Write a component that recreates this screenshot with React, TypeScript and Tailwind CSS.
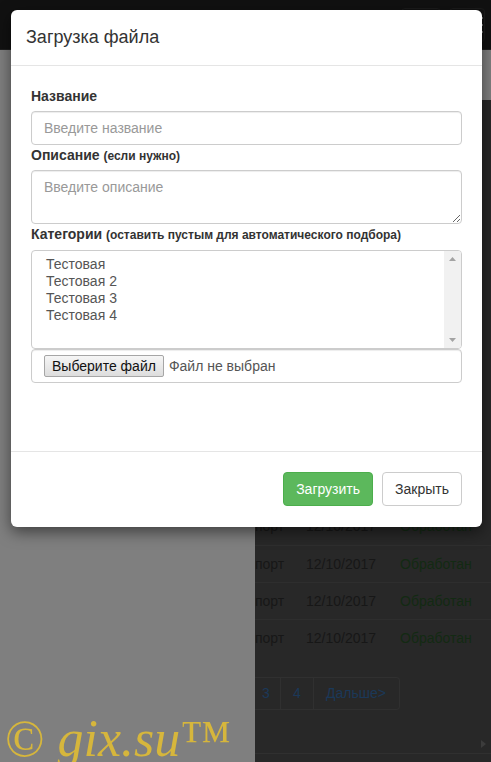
import React from 'react';

const rows = ['порт', 'порт', 'порт', 'порт'];
const categories = ['Тестовая', 'Тестовая 2', 'Тестовая 3', 'Тестовая 4'];

// Page behind the dimmed backdrop
const Backdrop: React.FC = () => (
  <div className="flex flex-col h-full">
    <div className="h-[50px] shrink-0 bg-[#111] border-b border-[#1e1e1e] flex items-center justify-end gap-[8px] pr-[6px]">
      <div className="w-[40px] h-[34px] rounded-[4px] border border-[#1b1b1b]" />
      <div className="w-[36px] h-[34px] rounded-[4px] border border-[#1b1b1b] flex flex-col items-end justify-center gap-[5px] pr-[1px]">
        <span className="block w-[22px] h-[2px] bg-[#666]" />
        <span className="block w-[22px] h-[2px] bg-[#666]" />
        <span className="block w-[22px] h-[2px] bg-[#666]" />
      </div>
    </div>
    <div className="flex flex-1 min-h-0">
      <div className="w-[255px] shrink-0 bg-[#7f7f7f]" />
      <div className="flex-1 flex flex-col bg-[#7f7f7f]">
        <div className="h-[50px] shrink-0" />
        <div className="flex-1 bg-[#282828] flex flex-col pt-[408px] text-[14px]">
          {rows.map((r, i) => (
            <div key={i} className={`h-[37px] flex items-center ${i > 0 ? 'border-t border-[#2e2e2e]' : ''}`}>
              <div className="w-[51px] shrink-0 whitespace-nowrap text-[#171717]">{r}</div>
              <div className="w-[94px] shrink-0 text-[#171717]">12/10/2017</div>
              <div className="text-[#132a13]">Обработан</div>
            </div>
          ))}
          <div className="mt-[21px] flex h-[33px] w-[145px] border border-l-0 border-[#303030] rounded-r-[4px] text-[#1b3858]">
            <div className="w-[26px] flex items-center pl-[7px] border-r border-[#303030]">3</div>
            <div className="w-[33px] flex items-center justify-center border-r border-[#303030]">4</div>
            <div className="flex-1 flex items-center pl-[12px]">Дальше&gt;</div>
          </div>
          <div className="mt-[25px] h-[19px] border-b border-[#303030] flex items-center justify-end pr-[5px]">
            <svg width="5" height="8" viewBox="0 0 5 8">
              <path d="M0 0 L5 4 L0 8 Z" fill="#3c3c3c" />
            </svg>
          </div>
        </div>
      </div>
    </div>
  </div>
);

const inputCls =
  'block w-full h-[34px] px-[12px] py-[6px] text-[14px] text-[#555] bg-white border border-[#ccc] rounded-[4px] shadow-[inset_0_1px_1px_rgba(0,0,0,0.075)] outline-none placeholder:text-[#999]';

const UploadModal: React.FC = () => (
  <div className="absolute left-[11px] top-[10px] w-[471px] bg-white rounded-[6px] shadow-[0_5px_15px_rgba(0,0,0,0.5)] text-[#333]">
    <div className="px-[15px] py-[15px] border-b border-[#e5e5e5]">
      <h4 className="text-[18px] leading-[25px]">Загрузка файла</h4>
    </div>

    <div className="h-[385px] p-[20px] text-[14px] leading-[20px]">
      <label className="block font-bold mb-[5px]">Название</label>
      <input type="text" placeholder="Введите название" className={inputCls} />

      <label className="block font-bold mb-[4px]">
        Описание <small className="text-[12px]">(если нужно)</small>
      </label>
      <textarea
        placeholder="Введите описание"
        className="block w-full h-[54px] px-[12px] py-[6px] text-[14px] text-[#555] bg-white border border-[#ccc] rounded-[4px] shadow-[inset_0_1px_1px_rgba(0,0,0,0.075)] outline-none placeholder:text-[#999]"
      />

      <label className="block font-bold mb-[5px]">
        Категории <small className="text-[12px]">(оставить пустым для автоматического подбора)</small>
      </label>
      <div className="flex h-[99px] border border-[#ccc] rounded-[4px] overflow-hidden">
        <div className="flex-1 pl-[14px] pt-[5px] text-[#555] leading-[17px]">
          {categories.map((c) => (
            <div key={c}>{c}</div>
          ))}
        </div>
        <div className="w-[17px] bg-[#f1f1f1] flex flex-col justify-between items-center py-[6px]">
          <svg width="7" height="4" viewBox="0 0 7 4">
            <path d="M0 4 L3.5 0 L7 4 Z" fill="#a3a3a3" />
          </svg>
          <svg width="7" height="4" viewBox="0 0 7 4">
            <path d="M0 0 L3.5 4 L7 0 Z" fill="#a3a3a3" />
          </svg>
        </div>
      </div>

      <div className="flex items-center h-[34px] px-[12px] border border-[#ccc] rounded-[4px] shadow-[inset_0_1px_1px_rgba(0,0,0,0.075)]">
        <span className="h-[22px] px-[7px] flex items-center text-[14px] text-[#111] border border-[#a6a6a6] rounded-[2px] bg-gradient-to-b from-[#f6f6f6] to-[#dddddd]">
          Выберите файл
        </span>
        <span className="ml-[5px] text-[#555]">Файл не выбран</span>
      </div>
    </div>

    <div className="flex justify-end gap-[9px] px-[20px] pt-[20px] pb-[21px] border-t border-[#e5e5e5] text-[14px]">
      <button className="h-[34px] px-[12px] rounded-[4px] bg-[#5cb85c] border border-[#4cae4c] text-white">
        Загрузить
      </button>
      <button className="h-[34px] px-[12px] rounded-[4px] bg-white border border-[#ccc] text-[#333]">
        Закрыть
      </button>
    </div>
  </div>
);

export default function App() {
  return (
    <div className="relative w-[491px] h-[762px] overflow-hidden font-['Liberation_Sans',Arial,sans-serif]">
      <Backdrop />
      <UploadModal />
      <div className="absolute left-[5px] top-[713px] text-[52px] leading-none whitespace-nowrap text-[#d6b63c] font-['Liberation_Serif','Times_New_Roman',serif]">
        © <i>gix.su</i>™
      </div>
    </div>
  );
}
